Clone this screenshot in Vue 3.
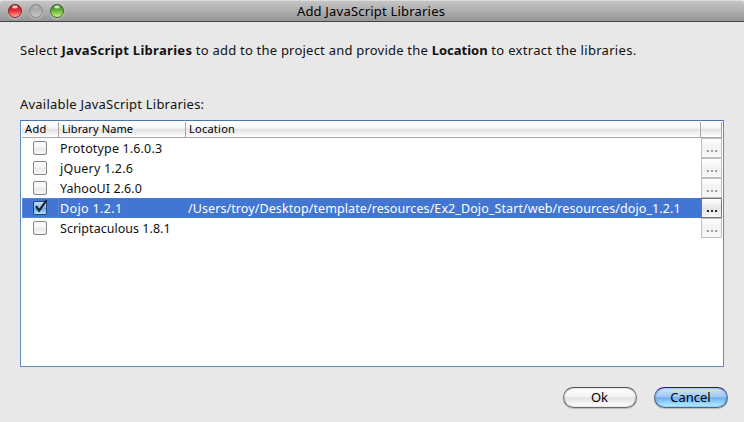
<script setup>
import { ref } from 'vue'

const libraries = ref([
  { name: 'Prototype 1.6.0.3', location: '', checked: false, cls: 'prototype' },
  { name: 'jQuery 1.2.6', location: '', checked: false, cls: 'jquery' },
  { name: 'YahooUI 2.6.0', location: '', checked: false, cls: 'yahoo' },
  { name: 'Dojo 1.2.1', location: '/Users/troy/Desktop/template/resources/Ex2_Dojo_Start/web/resources/dojo_1.2.1', checked: true, cls: 'dojo' },
  { name: 'Scriptaculous 1.8.1', location: '', checked: false, cls: 'scriptaculous' }
])
</script>

<template>
  <div class="dialog">
    <header class="titlebar">
      <div class="lights">
        <svg v-for="c in ['red', 'gray', 'green']" :key="c" class="light" viewBox="0 0 15 16">
          <defs>
            <linearGradient :id="'g-' + c" x1="0" y1="0" x2="0" y2="1">
              <stop offset="0" :class="c + '-a'" />
              <stop offset=".5" :class="c + '-b'" />
              <stop offset="1" :class="c + '-c'" />
            </linearGradient>
          </defs>
          <circle cx="7" cy="8" r="7" fill="none" stroke="#fff" stroke-opacity=".35" />
          <circle cx="7" cy="7" r="6.5" :fill="'url(#g-' + c + ')'" :class="c + '-ring'" />
          <ellipse cx="7" cy="2.9" rx="2.8" ry="1.6" fill="#fff" :opacity="c === 'gray' ? 0.25 : 0.75" />
        </svg>
      </div>
      <h1><span>Add JavaScript Libraries</span></h1>
    </header>

    <p class="intro"><span class="i1">Select </span><b class="i2">JavaScript Libraries</b><span class="i3"> to add to the project and provide the </span><b class="i4">Location</b><span class="i5"> to extract the libraries.</span></p>
    <p class="caption"><span>Available JavaScript Libraries:</span></p>

    <div class="table">
      <div class="row head">
        <div class="cell"><span class="h1">Add</span></div>
        <div class="cell"><span class="h2">Library Name</span></div>
        <div class="cell"><span class="h3">Location</span></div>
        <div class="cell"></div>
      </div>
      <div v-for="lib in libraries" :key="lib.name" class="row item" :class="{ selected: lib.checked }">
        <div class="check">
          <svg viewBox="0 0 16 18" width="16" height="18">
            <defs>
              <linearGradient id="box-off" x1="0" y1="0" x2="0" y2="1">
                <stop offset="0" stop-color="#fff" /><stop offset=".45" stop-color="#f4f4f4" />
                <stop offset=".55" stop-color="#e8e8e8" /><stop offset="1" stop-color="#fafafa" />
              </linearGradient>
              <linearGradient id="box-on" x1="0" y1="0" x2="0" y2="1">
                <stop offset="0" stop-color="#c9dff8" /><stop offset=".45" stop-color="#8fbdf0" />
                <stop offset=".55" stop-color="#65a5eb" /><stop offset="1" stop-color="#b5e9ff" />
              </linearGradient>
            </defs>
            <rect x="1.5" y="3.5" width="13" height="13" rx="1.5" :fill="lib.checked ? 'url(#box-on)' : 'url(#box-off)'" :stroke="lib.checked ? '#24447c' : '#858585'" />
            <path v-if="lib.checked" d="M4 8.2 7.1 12.6 14.5 2.4" fill="none" stroke="#161c28" stroke-width="2.1" />
          </svg>
        </div>
        <div class="name"><span :class="lib.cls">{{ lib.name }}</span></div>
        <div class="location"><span>{{ lib.location }}</span></div>
        <button class="browse"><i></i><i></i><i></i></button>
      </div>
    </div>

    <footer class="actions">
      <button class="pill"><span class="ok">Ok</span></button>
      <button class="pill primary"><span class="cancel">Cancel</span></button>
    </footer>
  </div>
</template>

<style>
body { margin: 0; background: #e8e8e8; overflow: hidden; }
</style>

<style scoped>
* { box-sizing: border-box; }
.dialog {
  width: 744px; height: 422px; background: #e8e8e8; color: #111;
  font: 13px/20px "Noto Sans", "Open Sans", sans-serif; white-space: pre;
  display: flex; flex-direction: column;
}
.titlebar {
  height: 22px; flex: none; display: grid; grid-template-columns: 64px 1fr 66px;
  border-top: 1px solid #dedede; border-bottom: 1px solid #444;
  background: linear-gradient(#c5c5c5, #969696); border-radius: 4px 4px 0 0;
}
.lights { display: flex; gap: 6px; padding: 3px 0 0 8px; }
.light { width: 15px; height: 16px; flex: none; }
.red-a { stop-color: #8c1a1c; } .red-b { stop-color: #ee3137; } .red-c { stop-color: #ffb3a9; }
.gray-a { stop-color: #969696; } .gray-b { stop-color: #b0b0b0; } .gray-c { stop-color: #cbcbcb; }
.green-a { stop-color: #346b1c; } .green-b { stop-color: #6dba3c; } .green-c { stop-color: #d4f58a; }
.red-ring { stroke: #81262a; } .gray-ring { stroke: #858585; } .green-ring { stroke: #37662a; }
h1 { margin: 0; font-size: 13px; line-height: 20px; font-weight: 400; text-align: center; color: #000; letter-spacing: .2px; }
p { margin: 0; padding-left: 20px; }
.intro { margin-top: 18px; height: 20px; }
.i1 { letter-spacing: .28px; }
.i2 { letter-spacing: .3px; }
.i3 { letter-spacing: .22px; }
.i5 { letter-spacing: .3px; }
.caption { margin-top: 34px; height: 20px; letter-spacing: .22px; }
.table {
  width: 704px; height: 247px; margin: 6px 0 0 20px; flex: none;
  border: 1px solid #5f8cc3; border-top-color: #4c76ad; background: #fff; padding: 1px 1px 0;
}
.row { display: grid; grid-template-columns: 37px 127px 515px 21px; width: 700px; }
.head {
  height: 16px; font-size: 11px; line-height: 14px; border-bottom: 1px solid #aaa; color: #000;
  background: linear-gradient(#fff, #f6f6f6 40%, #e3e3e3 50%, #fff);
}
.head .cell { border-right: 1px solid #a6a6a6; padding-left: 3px; }
.h1 { letter-spacing: .35px; }
.h2 { letter-spacing: .1px; }
.h3 { letter-spacing: .25px; }
.item { height: 20px; font-size: 12.5px; line-height: 22px; }
.selected { background: #4375d3; color: #fff; }
.check { display: flex; padding-left: 10px; }
.selected .check { border: 1px solid #5587d4; padding-left: 9px; }
.selected .check svg { margin-top: -1px; }
.name, .location { height: 20px; overflow: hidden; }
.name { padding-left: 1px; }
.prototype { letter-spacing: .15px; }
.jquery { letter-spacing: .2px; }
.yahoo { letter-spacing: .06px; }
.dojo { letter-spacing: .35px; }
.scriptaculous { letter-spacing: .03px; }
.location { padding-left: 2px; letter-spacing: .09px; }
.browse {
  width: 21px; height: 20px; padding: 11px 0 0; border: 1px solid #bfbfbf;
  background: linear-gradient(#fff, #f2f2f2 45%, #f8f8f8);
  display: flex; justify-content: center; gap: 2px;
}
.browse i { width: 2px; height: 2px; background: #9d9d9d; }
.selected .browse { border-color: #777; background: linear-gradient(#fff, #e6e6e6 50%, #f7f7f7); }
.selected .browse i { background: #222; }
.actions { display: flex; justify-content: flex-end; gap: 17px; padding: 20px 16px 0 0; }
.pill {
  width: 74px; height: 21px; padding: 0 1px 0 0; border: 1px solid #6b6b6b; border-top-color: #505050; border-radius: 11px;
  font: 13px/19px "Noto Sans", "Open Sans", sans-serif; color: #000; text-align: center;
  background: linear-gradient(#fff, #f3f3f3 45%, #e2e2e2 52%, #fff);
  box-shadow: inset 0 0 2px #aaa, 0 1px 1px #bbb;
}
.primary {
  border-color: #4b6490; border-top-color: #1c1c8c;
  background: linear-gradient(#d5e6fa, #9fc8f5 45%, #6caff0 52%, #bdf5ff);
  box-shadow: inset 0 0 2px #4577bd, 0 1px 1px #bbb;
}
</style>
